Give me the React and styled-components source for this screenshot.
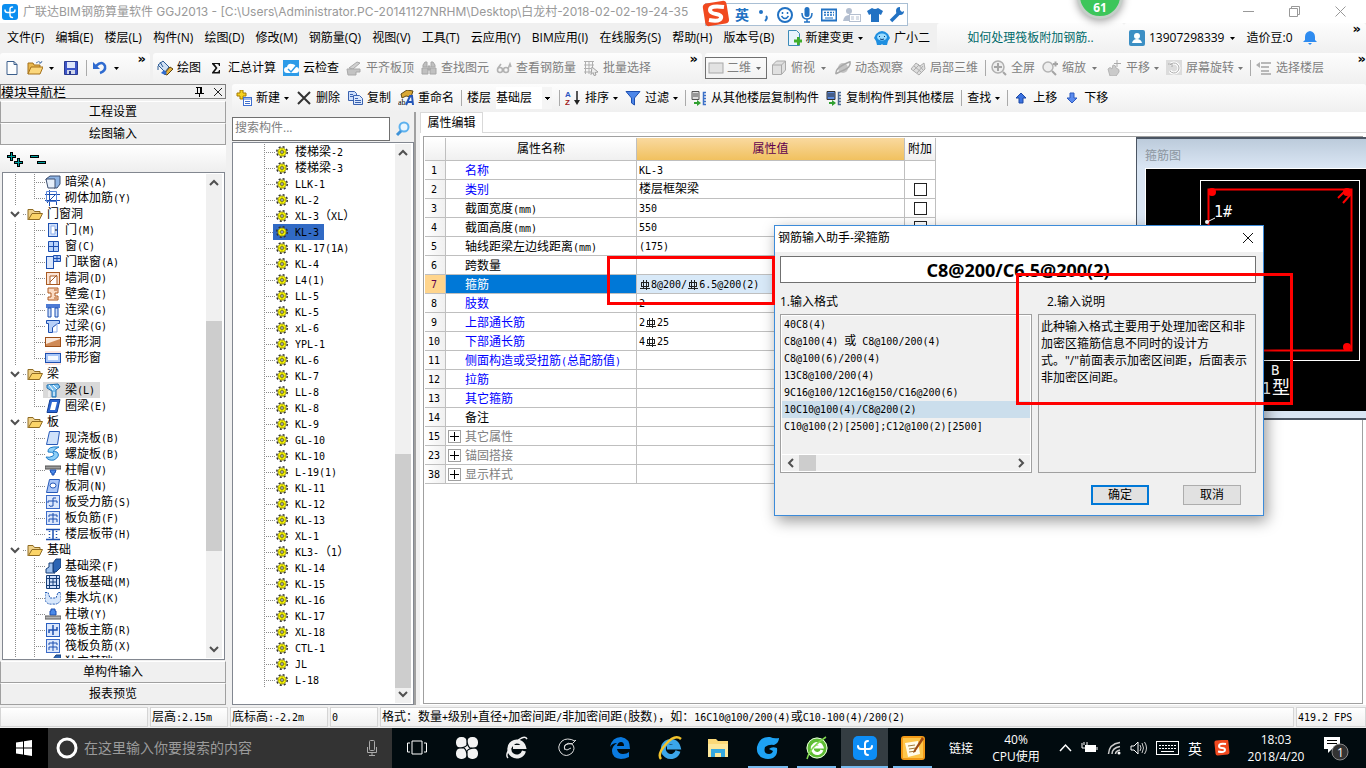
import styled, { createGlobalStyle } from "styled-components";

const GlobalStyle = createGlobalStyle`
  * {
    box-sizing: border-box;
  }

  body {
    margin: 0;
    font-family: "Open Sans", "Noto Sans CJK SC", sans-serif;
    font-size: 12px;
    line-height: 16px;
    color: #000;
    background: #f0f0f0;
  }

  button, input, select {
    font: inherit;
    color: inherit;
    border-radius: 0;
  }

  button {
    border: 0;
    background: none;
    padding: 0;
    white-space: nowrap;
  }

  ul {
    list-style: none;
    margin: 0;
    padding: 0;
  }
`

/* ---------- icons ---------- */

const B = '#1c4fb0'

const icons = {
  app: <><rect width="16" height="16" rx="3" fill="#0b8ef0"/><path d="M10.500 3q-2.500 0-2.500 2v6q0 2.500 2.500 2.500M3 6q0 2.500 2.500 2.500h5q2.500 0 2.500-2.500" stroke="#fff" strokeWidth="1.400" fill="none" strokeLinecap="round"/></>,
  newFile: <path d="M3 1.500h7l3 3v10H3z M10 1.500v3h3" fill="#fdfefe" stroke="#3c5f8c"/>,
  open: <><path d="M1 14V3h5l1 2h6v2" fill="#e9b84e" stroke="#a5701a"/><path d="M1 14l3-7h12l-3 7z" fill="#fbd77c" stroke="#a5701a"/><path d="M9 3q3-3 5 0l1-2M14 3h-2" stroke="#5a7fb0" fill="none"/></>,
  save: <><path d="M1.500 1.500h13v13h-13z" fill="#3d55c8" stroke="#2a3a90"/><path d="M4 2h8v6H4z" fill="#dfe6fa"/><path d="M4 10h8v4H4z" fill="#cfd6ea"/><path d="M6 11h2v3H6z" fill="#2a3a90"/></>,
  undo: <><path d="M4 6q6-6 9 0q1 5-5 7" stroke="#2f6bd0" strokeWidth="2.500" fill="none"/><path d="M1 2v7h7z" fill="#2f6bd0"/></>,
  paint: <><path d="M1 5l5-4 6 6-4 5z" fill="#cfe0f4" stroke="#2c5b94"/><path d="M3 2l3 5M1 6v4" stroke="#2c5b94"/><path d="M7 14l6-7 3 2-6 6z" fill="#e8b33b" stroke="#5e430f"/><path d="M4 13l4 2 2-2-3-3z" fill="#2f6bd0"/></>,
  sigma: <path d="M4 3h8v3h-1q0-2-2-2H6.500l3 4-3 4H9q2 0 2-2h1v3.500H4v-1L7.500 8 4 4z" fill="#111"/>,
  cloud: <><rect width="16" height="16" fill="#2d9be8"/><path d="M4 13a3 3 0 0 1 0-6q1-4 5-3q3 0 4 3a3 3 0 0 1 0 6z" fill="#fff"/><path d="M5 9l3 3 5-6" stroke="#2d9be8" fill="none" strokeWidth="1.500"/></>,
  align: <><path d="M3 8l8-6 3 1-7 6z" fill="#d0d0d0" stroke="#a9a9a9"/><path d="M1 9h13v3h-4v3H2z" fill="#c3c3c3" stroke="#a9a9a9"/></>,
  binoc: <><path d="M2 5l2-3h2v5H2zM10 2h2l2 3v2h-4zM1 8h6v6H1zM9 8h6v6H9zM7 6h2v4H7z" fill="#c0c0c0" stroke="#a6a6a6"/></>,
  glasses: <g fill="none" stroke="#b2b2b2" strokeWidth="1.600"><circle cx="4" cy="10" r="2.500"/><circle cx="10" cy="10" r="2.500"/><path d="M2 8l3-4M12 9l2-5 1 3"/></g>,
  batch: <><path d="M1 1.500h10M1 5h10M1 8.500h7M1 12h7M2.500 1v13M6 1v13M9.500 1v6" stroke="#b0b0b0" fill="none"/><path d="M9 7l6 5-3 .5 1 2.500-2 .5-1-3-2 2z" fill="#eee" stroke="#a0a0a0"/></>,
  plane: <rect x="1" y="3" width="14" height="10" fill="#e2e2e2" stroke="#a8a8a8"/>,
  cube: <path d="M1.500 5l4-4h9v9l-4 4.500h-9zM1.500 5h9v9M10.500 5l4-4" fill="#e0e0e0" stroke="#aaa"/>,
  orbit: <><circle cx="8" cy="8" r="5" fill="#c4c4c4"/><path d="M1 14Q0 9 8 5t7-3q1 5-6 8t-8 4" fill="none" stroke="#a8a8a8" strokeWidth="1.500"/></>,
  local3d: <path d="M1 9l5-6 4 3 4-3 1 6-6 6-4-3zM4 6l7 6M8 4l5 6M3 11l6-6M7 13l6-7" fill="#dedede" stroke="#adadad"/>,
  full: <><circle cx="7" cy="7" r="6" fill="#eee" stroke="#b0b0b0" strokeWidth="1.500"/><path d="M7 3v8M3 7h8M12 12l3 3" stroke="#a5a5a5" strokeWidth="2"/></>,
  zoom: <><circle cx="6" cy="7" r="5" fill="#eee" stroke="#b4b4b4" strokeWidth="1.500"/><path d="M10 11l4 4M11 4h5M13.500 1.500v5" stroke="#a5a5a5" strokeWidth="2"/></>,
  pan: <><path d="M2 9q2-3 4 0l1-4q3 0 3 3 4 1 3 4l-3 4H4z" fill="#cacaca" stroke="#b4b4b4"/><path d="M11 0v7M8 3.500h7" stroke="#aaa"/></>,
  rotate: <><rect x="0" y="0" width="16" height="15" fill="#dcdcdc"/><path d="M4 5a5 5 0 1 1 0 6" fill="none" stroke="#fff" strokeWidth="3"/><path d="M4 5a5 5 0 1 1 0 6M2 4h4v3" fill="none" stroke="#aaa"/></>,
  floors: <><path d="M5 2h10v2H5zM5 6h8v2H5zM5 10h8v2H5zM5 13h10v2H5z" fill="#b8b8b8"/><path d="M0 5l4-3v6z" fill="#b0b0b0"/></>,
  create: <><path d="M4 0h3v3h3v3H7v3H4V6H1V3h3z" fill="#f7d21e" stroke="#a67a00"/><rect x="7.500" y="7.500" width="8" height="8" fill="#fff" stroke="#3f6fd0"/><path d="M8 9h7M9 11.500h5M9 13.500h5" stroke="#3f6fd0"/></>,
  remove: <path d="M2 2l12 12M14 2L2 14" stroke="#333" strokeWidth="2"/>,
  copy: <><path d="M1.500 1.500h6l2 2v7h-8z" fill="#cfe0fb" stroke="#3a62b0"/><path d="M6.500 5.500h6l3 3v6h-9z" fill="#dbe8fd" stroke="#3a62b0"/><path d="M8 8.500h3M8 10.500h6M8 12.500h6M3 4.500h3M3 6.500h3" stroke="#3a62b0"/></>,
  rename: <><path d="M3 4l6-4 6 1-2 6-5-1-4 2z" fill="#d9a834" stroke="#5f4a16"/><text x="0" y="15" fontSize="8" fontFamily="Liberation Serif">ab</text><path d="M8 15l4-9h2l1 9M10 12h5" stroke="#2456b8" strokeWidth="2" fill="none"/></>,
  sort: <><text x="0" y="7" fontSize="8" fontWeight="700" fill="#2b55c0" fontFamily="Liberation Sans">A</text><text x="0" y="15" fontSize="8" fontWeight="700" fill="#a02020" fontFamily="Liberation Sans">Z</text><path d="M12 1v11" stroke="#222" strokeWidth="1.500"/><path d="M9 10h6l-3 5z" fill="#222"/></>,
  filter: <path d="M1 1.500h14L9.500 8v7l-3-2V8z" fill="#4d86e8" stroke="#1e4fb0"/>,
  fromFloor: <><path d="M1 1.500h7v8H1zM2 4h5M2 6h5" fill="#ddd" stroke="#555"/><path d="M15 2.500h-2.500v12H15M12.500 5.500H15M12.500 8.500H15M12.500 11.500H15" fill="none" stroke="#3c70c8" strokeWidth="1.500"/><path d="M3 12h3v-2l4 3-4 3v-2H3z" fill="#30a030"/></>,
  toFloor: <><path d="M1 1.500h8v8H1zM2 4h6M2 6h6" fill="#5b8be0" stroke="#333"/><path d="M15 2.500h-2.500v12H15M12.500 5.500H15M12.500 8.500H15M12.500 11.500H15" fill="none" stroke="#4b6a94" strokeWidth="1.500"/><path d="M3 12h3v-2l4 3-4 3v-2H3z" fill="#30a030"/></>,
  up: <path d="M8 3l5 5h-3v5H6V8H3z" fill="#3b72e0" stroke="#1d49a5"/>,
  down: <path d="M8 13l5-5h-3V3H6v5H3z" fill="#5b8bee" stroke="#2d5abf"/>,
  change: <><path d="M2.500 .5h8l3 3v12h-11z" fill="#e8f4fd" stroke="#3c8bb8"/><path d="M11 7l2.500 0v2.500H16v3h-2.500V15H11v-2.500H8v-3h3z" fill="#3fae2a"/></>,
  robot: <><path d="M2 4q6-6 12 0l2 4-2 3-1 4H9l-1-1-1 1H3l-1-4-2-3z" fill="#1f8fe0"/><ellipse cx="8" cy="7" rx="5" ry="3.500" fill="#9bdcff"/><path d="M5.500 6v1M10.500 6v1M6 9q2 1 4 0" stroke="#063c78" fill="none"/></>,
  user: <><rect width="16" height="16" rx="2" fill="#3c8fc4"/><circle cx="8" cy="6" r="3" fill="#fff"/><path d="M3 13q1-4 5-4t5 4z" fill="#fff"/></>,
  bell: <path d="M8 1q5 1 5 6v3l2 2H1l2-2V7q0-5 5-6M6 13h4l-2 2z" fill="#2f8cf0"/>,
  search: <><circle cx="9" cy="6" r="4.500" fill="#eaf6ff" stroke="#5db1ee" strokeWidth="2"/><path d="M6 10l-4 4" stroke="#3e92d8" strokeWidth="3"/></>,
  gear: <><circle cx="8" cy="8" r="7" fill="none" stroke="#333" strokeWidth="2" strokeDasharray="2.750 2.750"/><circle cx="8" cy="8" r="5.500" fill="#ff0" stroke="#77720a"/><path d="M8 3v3M8 10v3M3 8h3M10 8h3" stroke="#a09a00"/><rect x="6.500" y="6.500" width="3" height="3" fill="#fff" stroke="#222"/></>,
  folder: <><path d="M1 14V3.500h5l1.500 2H13V8" fill="#f0d28a" stroke="#8f6b22"/><path d="M1.500 13.500L5 7.500h10.500l-3 6z" fill="#fbd468" stroke="#8f6b22"/></>,
  t_hidden: <><path d="M1 5l4-3h10v8l-3 4H9V6H1z" fill="#8eb4e4" stroke="#3c4e70"/><path d="M1 5h9v9H3z" fill="#e6effa" stroke="#3c4e70"/></>,
  t_masonry: <><path d="M0 4.500h15M0 10.500h15M4.500 0v16M11.500 2v13M2 13l9-9" stroke={B} fill="none"/><path d="M1.500 1.500h10v10h-10z" fill="none" stroke="#5884d8"/></>,
  t_door: <><rect x="3.500" y="1.500" width="9" height="13" fill="#cfe0fb" stroke={B}/><path d="M6 4h4v8H6z" fill="#fff" stroke="#8fb0ec"/><path d="M11 7v2" stroke="#000"/></>,
  t_window: <path d="M3.500 3.500h10v10h-10zM8.500 4v10M4 8.500h10" fill="#b9d3fb" stroke={B}/>,
  t_doorwin: <><rect x="1.500" y="2.500" width="7" height="12" fill="#dbe7fb" stroke={B}/><path d="M8.500 1.500h7v6h-7zM12 2v6M9 4.500h7" fill="#a9c6f8" stroke={B}/></>,
  t_wallhole: <><rect x="1.500" y="2.500" width="13" height="12" fill="#fbe3d4" stroke="#a85a22"/><path d="M5 14V6h7v8M5 12l7-7" fill="#fff" stroke="#a85a22"/></>,
  t_niche: <><path d="M3 2h10v5h-3v3h3v4H3v-3h3V7H3z" fill="#fbdcc4" stroke="#b05a20"/><path d="M9 4h3M9 12h3" stroke="#b05a20"/></>,
  t_linkbeam: <><path d="M1 2h14v4H1z" fill="#4d7ad4"/><path d="M3 6h3v9H3zM10 6h3v9h-3z" fill="#cfe0fb" stroke={B}/></>,
  t_lintel: <><path d="M1.500 2.500h13v3h-2l-5 4v5h-4v-9h-2z" fill="#b7d0f8" stroke={B}/><path d="M12 5v9H8" fill="none" stroke="#8fb0ec"/></>,
  t_striphole: <><rect x=".5" y="3.500" width="15" height="9" fill="#fbeadd" stroke="#9c4e18"/><path d="M1 10l14-5v7H1z" fill="#cf8a57"/></>,
  t_stripwin: <><path d="M0 1h16v14H0z" fill="#fde6e0"/><rect x=".5" y="3.500" width="15" height="9" fill="#a9c6f8" stroke={B}/><rect x="3" y="6" width="10" height="4" fill="#f5f9ff"/></>,
  t_beam: <><path d="M2 3l11-1 2 3-4 3v7H7V9L2 6z" fill="#7cc0ee" stroke="#1d6fb0"/><path d="M4 3l4 5M8 3l4 4M4 9v6M9 10v4" stroke="#fff"/></>,
  t_ring: <><path d="M5 1.500h10l-3 13H2z" fill="#2b65d0" stroke="#123e94"/><path d="M7 4h5l-2 8H5z" fill="#fff"/></>,
  t_slab: <path d="M4.500 1.500h10l-2 13h-11z" fill="#cfe2fb" stroke="#2659b8"/>,
  t_spiral: <path d="M14 1Q2 0 3 6q8 0 5 4-4 2-7 1 2 4 8 3 7-4 3-8-3-1-4 0 1-3 6-5" fill="#8fd0f8" stroke="#1e7cc8"/>,
  t_cap: <><path d="M0 4h16v3H0z" fill="#9b9b9b" stroke="#4e4e4e"/><path d="M5 8h6l-1 3H9v2H7v-2H6z" fill="#4b8ae8" stroke={B}/></>,
  t_slabhole: <><path d="M4.500 1.500h10l-2 13h-11z" fill="#a9c6f8" stroke="#2659b8"/><ellipse cx="8" cy="7.500" rx="3" ry="2.500" fill="#fff" stroke="#2659b8"/></>,
  t_rebar: <><rect x="1.500" y="1.500" width="13" height="13" fill="#dce8fc" stroke="#3d6cc8"/><path d="M3 9V7h9v2M8 4v8q-4 1-4-1M8 4h3" stroke={B} fill="none"/></>,
  t_negbar: <><rect x="1.500" y="1.500" width="13" height="13" fill="#dce8fc" stroke="#3d6cc8"/><path d="M8 3v10M4 7V5h8v2M4 12V9h8v3" stroke={B} fill="none"/></>,
  t_strip: <path d="M1 3.500h14M1 13.500h14M8 4v10M4.500 5v1M4.500 8v1M4.500 11v1M11.500 5v1M11.500 8v1M11.500 11v1" stroke={B} strokeWidth="1.500" fill="none"/>,
  t_fbeam: <><path d="M8 5l3-4h5v8l-5 5H8z" fill="#2c65b4" stroke="#163e78"/><path d="M1 15v-4l3-2V5h4v9l2 1z" fill="#9cc0ee" stroke="#163e78"/></>,
  t_raft: <path d="M1.500 1.500h13v13h-13zM4.500 1v14M11.500 1v14M1 4.500h14M1 11.500h14M8 4v8M4 8h8" fill="#cfe0fb" stroke="#163e78"/>,
  t_pit: <path d="M0 2.500h3L5 8h6l2-5.500h3V10q-3 5-8 4-6 1-8-4z" fill="#d7e7fc" stroke="#2a5fb4" strokeDasharray="2 1"/>,
  t_pier: <><path d="M5 9V5h1V3h4v2h1v4z" fill="#4b8ae8" stroke={B}/><path d="M0 10h16v3H0z" fill="#b5b5b5" stroke="#5c5c5c"/></>,
  t_mainbar: <><rect x="1.500" y="1.500" width="13" height="13" fill="#dce8fc" stroke="#2a5fc0"/><path d="M8 3v10M4 11V8h8V5" stroke={B} fill="none" strokeWidth="1.500"/></>,
}

const Svg = styled.svg`
  display: block;
  flex: none;
`

const ArrowSvg = styled(Svg)`
  margin: 0 ${props => props.$tight ? 0 : 2}px;
`

function DropArrow({tight, color = '#000'}) {
  return <ArrowSvg $tight={tight} width="5" height="3" viewBox="0 0 5 3"><path d="M0 0h5L2.500 3z" fill={color}/></ArrowSvg>
}

function Icon({name, size = 16}) {
  return <Svg width={size} height={size} viewBox="0 0 16 16" aria-hidden="true">{icons[name]}</Svg>
}

function Chevron({dir = 'down', color = '#505050'}) {
  const d = {down: 'M1 3l4 4 4-4', up: 'M1 7l4-4 4 4', left: 'M7 1L3 5l4 4', right: 'M3 1l4 4-4 4'}[dir]
  return <Svg width="10" height="10" viewBox="0 0 10 10"><path d={d} fill="none" stroke={color} strokeWidth="2"/></Svg>
}

/* ---------- mixed text: full width hanzi with half width latin ---------- */

const Latin = styled.span`
  font-family: "DejaVu Sans Mono", monospace;
  font-size: 10px;
  line-height: 10px;
  white-space: pre;
`

function Mixed({children}) {
  return children.split(/([\x20-\x7e]+)/).filter(Boolean).map((part, i) =>
    /^[\x20-\x7e]/.test(part) ? <Latin key={i}>{part}</Latin> : part
  )
}

/* ---------- window frame ---------- */

const Page = styled.div`
  position: relative;
  display: flex;
  flex-direction: column;
  height: 100vh;
  overflow: hidden;
`

const TitleBar = styled.header`
  display: flex;
  align-items: center;
  height: 23px;
  flex: none;
  padding: 0 20px 0 2px;
  gap: 5px;
  background: #fff;
  color: #999;
`

const Title = styled.h1`
  flex: 1;
  margin: 0;
  font-family: Inter, "Noto Sans CJK SC", sans-serif;
  font-size: 12px;
  font-weight: 400;
  white-space: nowrap;
`

const WindowButtons = styled.div`
  display: flex;
  gap: 35px;
`

const MenuBar = styled.nav`
  display: flex;
  height: 30px;
  flex: none;
`

const MenuGroup = styled.div`
  display: flex;
  align-items: center;
  justify-content: space-between;
  padding: 0 7px;
  width: 937px;
  flex: none;
`

const Strip = styled.div`
  display: flex;
  align-items: center;
  justify-content: ${props => props.$center ? 'center' : 'flex-start'};
  flex: ${props => props.$grow ? '1' : 'none'};
  min-width: 0;
  padding: 0 ${props => props.$pad ?? 4}px;
  gap: ${props => props.$gap ?? 7}px;
  width: ${props => props.$width ? props.$width + 'px' : 'auto'};
  border-radius: 3px;
  background: linear-gradient(#fdfdfd, #f0f0f0);
`

const ToolBar = styled.div`
  display: flex;
  gap: 3px;
  height: ${props => props.$height}px;
  flex: none;
`

const Tool = styled.button`
  display: flex;
  align-items: center;
  flex: none;
  gap: 4px;
  color: ${props => props.$dim ? '#808080' : '#000'};
`

const Divider = styled.span`
  width: 1px;
  height: 16px;
  flex: none;
  margin-right: -2px;
  background: #aaa;
`

const More = styled.button`
  align-self: flex-start;
  margin-left: auto;
  font: 700 13px/12px "DejaVu Sans", sans-serif;
`

const TipLink = styled.a`
  color: #006a6a;
  text-decoration: none;
`

const ViewSelect = styled.button`
  display: flex;
  align-items: center;
  gap: 3px;
  width: 62px;
  height: 22px;
  margin-right: -3px;
  padding: 0 2px;
  border: 1px solid #707070;
  color: #808080;
`

const FloorBox = styled.label`
  display: flex;
  align-items: center;
  gap: 5px;
`

const FloorSelect = styled.select`
  width: 56px;
  height: 22px;
  padding: 0;
  border: 0;
  appearance: none;
  background: linear-gradient(#000, #000) 49px 10px / 5px 1px no-repeat,
    linear-gradient(#000, #000) 50px 11px / 3px 1px no-repeat,
    linear-gradient(#000, #000) 51px 12px / 1px 1px no-repeat,
    linear-gradient(90deg, #fff 46px, #f5f5f5 46px);
`

/* ---------- body ---------- */

const Body = styled.main`
  display: flex;
  flex: 1;
  min-height: 0;
  gap: 6px;
  padding-top: 1px;
`

const Sidebar = styled.aside`
  display: flex;
  flex-direction: column;
  width: 226px;
  flex: none;
`

const DockTitle = styled.div`
  display: flex;
  align-items: center;
  height: 15px;
  margin-bottom: 2px;
  border: 1px solid #808080;
  font-size: 13px;
  flex: none;
  padding-right: 3px;
  gap: 10px;
  overflow: hidden;
`

const DockName = styled.span`
  flex: 1;
`

const SectionButton = styled.button`
  height: 22px;
  flex: none;
  border: 1px solid #a0a0a0;
  border-top-color: #fff;
  background: #f0f0f0;
`

const ExpandBar = styled.div`
  display: flex;
  align-items: center;
  gap: 7px;
  height: 27px;
  flex: none;
  padding-left: 6px;
  background: linear-gradient(#fff, #eee);
`

const Framed = styled.div`
  display: flex;
  flex: 1;
  min-height: 0;
  margin: ${props => props.$inset ? '0 1px 1px 2px' : '0'};
  padding: 1px 2px 1px 0;
  border: 1px solid #828790;
  background: #fff;
`

const List = styled.ul`
  flex: 1;
  overflow: hidden;
`

const ScrollTrack = styled.div`
  display: flex;
  flex-direction: column;
  align-items: center;
  justify-content: space-between;
  width: 16px;
  padding: 4px 0;
  background: #f0f0f0;
`

const ThumbArea = styled.div`
  display: flex;
  flex-direction: column;
  width: 100%;
  flex: 1;
`

const ThumbPart = styled.div`
  flex: ${props => props.$weight} 0 0;
  background: ${props => props.$solid ? '#cdcdcd' : 'transparent'};
`

const dotsV = 'repeating-linear-gradient(#8c8c8c 0 1px, transparent 1px 2px)'
const dotsH = 'repeating-linear-gradient(90deg, #8c8c8c 0 1px, transparent 1px 2px)'

const TreeRow = styled.li`
  display: flex;
  align-items: center;
  height: 16px;
  padding-left: ${props => props.$indent}px;
  white-space: nowrap;
`

const Guide = styled.span`
  width: 19px;
  height: 16px;
  flex: none;
  background: ${dotsV} 0 0 / 1px 16px no-repeat;
`

const Branch = styled.span`
  width: 11px;
  height: 16px;
  flex: none;
  background: ${dotsV} 0 0 / 1px ${props => props.$last ? 8 : 16}px no-repeat,
    ${dotsH} 0 8px / 11px 1px no-repeat;
`

const Stub = styled.span`
  width: 4px;
  height: 1px;
  margin-left: 3px;
  background: ${dotsH};
`

const Leaf = styled.span`
  display: flex;
  align-items: center;
  height: 16px;
  gap: 4px;
  margin-left: -2px;
  padding: 0 5px 0 2px;
  background: ${props => props.$active ? '#d9d9d9' : 'transparent'};
`

const FolderName = styled.span`
  margin-left: 4px;
`

const Center = styled.section`
  display: flex;
  flex-direction: column;
  flex: 1;
  min-width: 0;
`

const Columns = styled.div`
  display: flex;
  gap: 4px;
  flex: 1;
  min-height: 0;
`

const ComponentPane = styled.div`
  display: flex;
  flex-direction: column;
  width: 184px;
  flex: none;
  padding-top: 5px;
  border-right: 2px solid #a0a0a0;
`

const SearchRow = styled.div`
  display: flex;
  align-items: center;
  gap: 5px;
  height: 25px;
  padding-bottom: 1px;
  flex: none;
`

const SearchInput = styled.input`
  width: 158px;
  height: 24px;
  padding: 0 2px 3px;
  border: 1px solid #707070;
  background: #fff;

  &::placeholder {
    color: #808080;
    opacity: 1;
  }
`

const ComponentLeaf = styled.span`
  display: flex;
  align-items: center;
  height: 16px;
  gap: 7px;
  margin-left: -2px;
  padding: 0 5px 0 3px;
  background: ${props => props.$active ? '#316ac5' : 'transparent'};
`

const EditorPane = styled.div`
  position: relative;
  display: flex;
  flex-direction: column;
  flex: 1;
  min-width: 0;
  background: #fff;
`

const TabBar = styled.div`
  display: flex;
  height: 21px;
  flex: none;

  &::after {
    content: '';
    flex: 1;
    border-bottom: 1px solid #d9d9d9;
  }
`

const Tab = styled.button`
  width: 63px;
  border: 1px solid #d9d9d9;
  border-bottom: 0;
`

const Sheet = styled.div`
  flex: 1;
  min-height: 0;
  margin: 3px 3px 1px;
  padding: 1px;
  border: 1px solid #a0a0a0;
`

/* ---------- property table ---------- */

const PropertyTable = styled.table`
  width: 511px;
  table-layout: fixed;
  border-collapse: separate;
  border-spacing: 0;

  th, td {
    height: 19px;
    padding: 0 0 0 2px;
    font-weight: 400;
    text-align: left;
    white-space: nowrap;
    border-right: 1px solid #bfbfbf;
    border-bottom: 1px solid #bfbfbf;
    overflow: hidden;
    line-height: 16px;
  }

  thead th {
    height: 23px;
    padding: 0;
    text-align: center;
    background: linear-gradient(#fff, #f0f0f0);
  }

  thead th.value {
    color: #60004e;
    background: linear-gradient(#f9d99f, #f1c15f);
  }
`

const NumberCell = styled.th`
  && {
    padding: 0 2px 0 0;
    text-align: center;
    color: ${props => props.$active ? '#60004e' : '#000'};
    background: ${props => props.$active ? '#ffd58d' : 'linear-gradient(90deg, #fff, #f0f0f0)'};
  }
`

const nameColors = {key: '#0000ff', plain: '#000', group: '#808080'}

const NameCell = styled.td`
  color: ${props => props.$active ? '#fff' : nameColors[props.$kind]};
  background: ${props => props.$active ? '#0078d7' : '#fff'};
`

const NameInner = styled.div`
  display: flex;
  align-items: center;
  gap: 4px;
  padding-top: 1px;
  padding-left: ${props => props.$group ? 0 : 17}px;
`

const ValueCell = styled.td`
  background: ${props => props.$active ? '#d8e9f8' : '#fff'};
`

const CheckCell = styled.td`
  && {
    padding: 0;
    text-align: center;
  }
`

const Check = styled.input`
  display: block;
  appearance: none;
  width: 13px;
  height: 13px;
  margin: 0 auto;
  border: 1px solid #222;
  background: #fff;
`

const Expander = styled.button`
  display: grid;
  place-items: center;
  width: 13px;
  height: 13px;
  border: 1px solid #a0a0a0;
`

const RebarSvg = styled.svg`
  display: inline-block;
  vertical-align: -2px;
  margin: 0 1px;
`

function Rebar() {
  return <RebarSvg width="10" height="10" viewBox="0 0 10 10">
    <path d="M3.500 0v8M6.500 0v10M1.500 2.500v4M8.500 2.500v4M1 2.500h8M1 6.500h8M0 8.500h10" stroke="#222" fill="none"/>
  </RebarSvg>
}

/* ---------- floating windows ---------- */

const Diagram = styled.section`
  position: absolute;
  top: 25px;
  right: 0;
  width: 230px;
  height: 283px;
  padding: 9px 0 0 8px;
  border: 2px solid #4b5563;
  border-width: 2px 0 2px 1px;
  background: linear-gradient(#bccbdb, #d9e5f3 28px);
`

const DiagramTitle = styled.h2`
  margin: 0;
  padding-bottom: 4px;
  font-size: 12px;
  font-weight: 400;
  color: #8c96a0;
`

const DiagramSvg = styled.svg`
  display: block;
  width: 100%;
  border: 1px solid #fff;
  border-width: 1px 0 0 1px;
  background: #000;
`

const Dialog = styled.section`
  position: absolute;
  left: 774px;
  top: 225px;
  width: 490px;
  border: 1px solid #3c8bd9;
  background: #f0f0f0;
  box-shadow: 3px 5px 14px rgba(0, 0, 0, .4);
`

const DialogTitle = styled.header`
  display: flex;
  align-items: center;
  justify-content: space-between;
  height: 26px;
  padding: 0 9px 2px 3px;
  background: #fff;
`

const DialogName = styled.h2`
  margin: 0;
  font-size: 12px;
  font-weight: 400;
`

const DialogBody = styled.div`
  display: grid;
  grid-template-columns: 252px 218px;
  column-gap: 6px;
  padding: 4px 5px 10px;
`

const Formula = styled.input`
  grid-column: 1 / -1;
  height: 27px;
  padding: 0;
  border: 1px solid #707070;
  background: #fff;
  text-align: center;
  font-size: 18px;
  font-weight: 700;
  font-family: "Noto Sans", sans-serif;
`

const Caption = styled.h3`
  margin: 11px 0 4px;
  padding-left: ${props => props.$shift ? 9 : 0}px;
  font-size: 12px;
  line-height: 16px;
  font-weight: 400;
`

const FormatBox = styled.div`
  display: flex;
  flex-direction: column;
  height: 159px;
  padding: 1px;
  border: 1px solid #a0a0a0;
  outline: 1px solid #fff;
  outline-offset: -2px;
`

const Format = styled.li`
  height: 17px;
  padding-left: 2px;
  white-space: nowrap;
  background: ${props => props.$active ? '#cbdeec' : 'transparent'};
`

const HScroll = styled.div`
  display: flex;
  align-items: center;
  height: 17px;
  padding: 0 4px;
  border-top: 1px solid #fff;
`

const HThumb = styled.span`
  width: 17px;
  height: 16px;
  margin: 0 auto 0 3px;
  background: #cdcdcd;
`

const Note = styled.p`
  margin: 0;
  height: 159px;
  padding: 3px 2px;
  border: 1px solid #a0a0a0;
  line-height: 17px;
`

const DialogActions = styled.div`
  grid-column: 1 / -1;
  display: flex;
  justify-content: flex-end;
  gap: 34px;
  padding: 12px 15px 0;
`

const ActionButton = styled.button`
  width: 58px;
  height: 20px;
  background: #e1e1e1;
  border: ${props => props.$primary ? '2px solid #0078d7' : '1px solid #adadad'};
`

const Marker = styled.div`
  position: absolute;
  left: ${props => props.$x}px;
  top: ${props => props.$y}px;
  width: ${props => props.$w}px;
  height: ${props => props.$h}px;
  border: 3px solid #f00;
  pointer-events: none;
`

const ImeBar = styled.div`
  position: absolute;
  left: 705px;
  top: 3px;
  display: flex;
  align-items: center;
  gap: 6px;
  width: 203px;
  height: 23px;
  padding: 0 3px 0 29px;
  border: 1px solid #a9bfd4;
  background: #fff;
  color: #2272c3;
  font-size: 14px;
  font-weight: 700;
`

const ImeLogo = styled.svg`
  position: absolute;
  left: -4px;
  top: -4px;
`

const SpeedBall = styled.div`
  position: absolute;
  left: 1077px;
  top: -27px;
  width: 46px;
  height: 46px;
  padding-top: 24px;
  border: 3px solid #c4cfc8;
  border-radius: 50%;
  background: #3cc65a;
  box-shadow: 0 2px 8px rgba(0, 0, 0, .4);
  color: #fff;
  font-weight: 700;
  text-align: center;
`

/* ---------- status bar and task bar ---------- */

const StatusBar = styled.footer`
  display: flex;
  gap: 2px;
  height: 23px;
  flex: none;
  padding: 2px 0 1px;
`

const StatusCell = styled.span`
  display: flex;
  align-items: center;
  flex: ${props => props.$width ? 'none' : '1'};
  width: ${props => props.$width ? props.$width + 'px' : 'auto'};
  padding-left: 1px;
  border: 1px solid #d5d5d5;
  background: linear-gradient(#fff, #f0f0f0);
  white-space: pre;
`

const TaskBar = styled.footer`
  display: flex;
  height: 40px;
  flex: none;
  background: #010b0f;
  color: #fff;
`

const StartButton = styled.button`
  display: grid;
  place-items: center;
  width: 48px;
  background: #000;
`

const TaskSearch = styled.label`
  display: flex;
  align-items: center;
  gap: 6px;
  width: 344px;
  padding: 0 14px 0 8px;
  background: #333;
`

const TaskInput = styled.input`
  flex: 1;
  min-width: 0;
  padding: 0;
  border: 0;
  background: none;
  font-size: 14px;

  &::placeholder {
    color: #9b9b9b;
    opacity: 1;
  }
`

const TaskApp = styled.button`
  display: grid;
  place-items: center;
  width: ${props => props.$width ?? 50}px;
  border-bottom: 2px solid ${props => props.$running ? '#76b9ed' : 'transparent'};
  border-top: 2px solid transparent;
  margin: 0 ${props => props.$gap ?? 0}px;
  background: ${props => props.$active ? '#343d42' : 'transparent'};
`

const Tray = styled.div`
  display: flex;
  align-items: center;
  flex: 1;
  padding-left: 12px;
`

const TrayText = styled.span`
  flex: none;
  width: ${props => props.$width ? props.$width + 'px' : 'auto'};
  text-align: center;
  line-height: 17px;
  font-size: ${props => props.$size ?? 12}px;
  white-space: pre-line;
  margin-left: ${props => props.$left ?? 0}px;
`

const TrayIcons = styled.div`
  display: flex;
  align-items: center;
  gap: 9px;
  margin-left: ${props => props.$left}px;
`

const Notifications = styled.button`
  display: flex;
  margin-left: 17px;
`

/* ---------- data ---------- */

const menus = ['文件(F)', '编辑(E)', '楼层(L)', '构件(N)', '绘图(D)', '修改(M)', '钢筋量(Q)', '视图(V)',
  '工具(T)', '云应用(Y)', 'BIM应用(I)', '在线服务(S)', '帮助(H)', '版本号(B)']

const tree = [
  {leaves: [['t_hidden', '暗梁(A)'], ['t_masonry', '砌体加筋(Y)']]},
  {name: '门窗洞', leaves: [['t_door', '门(M)'], ['t_window', '窗(C)'], ['t_doorwin', '门联窗(A)'],
    ['t_wallhole', '墙洞(D)'], ['t_niche', '壁龛(I)'], ['t_linkbeam', '连梁(G)'], ['t_lintel', '过梁(G)'],
    ['t_striphole', '带形洞'], ['t_stripwin', '带形窗']]},
  {name: '梁', leaves: [['t_beam', '梁(L)'], ['t_ring', '圈梁(E)']]},
  {name: '板', leaves: [['t_slab', '现浇板(B)'], ['t_spiral', '螺旋板(B)'], ['t_cap', '柱帽(V)'],
    ['t_slabhole', '板洞(N)'], ['t_rebar', '板受力筋(S)'], ['t_negbar', '板负筋(F)'], ['t_strip', '楼层板带(H)']]},
  {name: '基础', open: true, leaves: [['t_fbeam', '基础梁(F)'], ['t_raft', '筏板基础(M)'], ['t_pit', '集水坑(K)'],
    ['t_pier', '柱墩(Y)'], ['t_mainbar', '筏板主筋(R)'], ['t_negbar', '筏板负筋(X)'], ['t_fbeam', '独立基础(P)']]},
]

const components = ['楼梯梁-2', '楼梯梁-3', 'LLK-1', 'KL-2', 'XL-3（XL）', 'KL-3', 'KL-17(1A)', 'KL-4', 'L4(1)',
  'LL-5', 'KL-5', 'xL-6', 'YPL-1', 'KL-6', 'KL-7', 'LL-8', 'KL-8', 'KL-9', 'GL-10', 'KL-10', 'L-19(1)', 'KL-11',
  'KL-12', 'KL-13', 'XL-1', 'KL3-（1）', 'KL-14', 'KL-15', 'KL-16', 'KL-17', 'XL-18', 'CTL-1', 'JL', 'L-18']

// '$' in a value stands for the rebar grade symbol
const properties = [
  ['1', 'key', '名称', 'KL-3'],
  ['2', 'key', '类别', '楼层框架梁'],
  ['3', 'plain', '截面宽度(mm)', '350'],
  ['4', 'plain', '截面高度(mm)', '550'],
  ['5', 'plain', '轴线距梁左边线距离(mm)', '(175)'],
  ['6', 'plain', '跨数量', ''],
  ['7', 'key', '箍筋', '$8@200/$6.5@200(2)'],
  ['8', 'key', '肢数', '2'],
  ['9', 'key', '上部通长筋', '2$25'],
  ['10', 'key', '下部通长筋', '4$25'],
  ['11', 'key', '侧面构造或受扭筋(总配筋值)', ''],
  ['12', 'key', '拉筋', ''],
  ['13', 'key', '其它箍筋', ''],
  ['14', 'plain', '备注', ''],
  ['15', 'group', '其它属性', ''],
  ['23', 'group', '锚固搭接', ''],
  ['38', 'group', '显示样式', ''],
]

const formats = ['40C8(4)', 'C8@100(4) 或 C8@100/200(4)', 'C8@100(6)/200(4)', '13C8@100/200(4)',
  '9C16@100/12C16@150/C16@200(6)', '10C10@100(4)/C8@200(2)', 'C10@100(2)[2500];C12@100(2)[2500]']

/* ---------- parts ---------- */

function ToolItem({icon, label, arrow, dim, tight}) {
  return <Tool $dim={dim} type="button">
    {icon && <Icon name={icon}/>}
    {label && <span>{label}</span>}
    {arrow && <DropArrow tight={tight} color={dim ? '#777' : '#000'}/>}
  </Tool>
}

function ScrollBar({before, size, after}) {
  return <ScrollTrack>
    <Chevron dir="up"/>
    <ThumbArea>
      <ThumbPart $weight={before}/>
      <ThumbPart $weight={size} $solid/>
      <ThumbPart $weight={after}/>
    </ThumbArea>
    <Chevron/>
  </ScrollTrack>
}

function ModuleTree() {
  return <Framed $inset>
    <List>
      {tree.map((group, g) => [
        group.name && <TreeRow key={group.name} $indent={7}>
          <Chevron/>
          <Stub/>
          <Icon name="folder"/>
          <FolderName>{group.name}</FolderName>
        </TreeRow>,
        ...group.leaves.map(([icon, label], i) =>
          <TreeRow key={g + label} $indent={12}>
            <Guide/>
            <Branch $last={!group.open && i === group.leaves.length - 1}/>
            <Leaf $active={label === '梁(L)'}>
              <Icon name={icon}/>
              <span><Mixed>{label}</Mixed></span>
            </Leaf>
          </TreeRow>
        ),
      ])}
    </List>
    <ScrollBar before={132} size={229} after={92}/>
  </Framed>
}

function PropertyValue({value}) {
  return value.split('$').map((part, i) =>
    <span key={i}>{i > 0 && <Rebar/>}<Mixed>{part}</Mixed></span>
  )
}

function Properties() {
  return <PropertyTable>
    <colgroup>
      <col width="21"/>
      <col width="191"/>
      <col width="268"/>
      <col width="31"/>
    </colgroup>
    <thead>
      <tr>
        <th aria-label="#"></th>
        <th>属性名称</th>
        <th className="value">属性值</th>
        <th>附加</th>
      </tr>
    </thead>
    <tbody>
      {properties.map(([no, kind, name, value], i) => {
        const active = no === '7'
        return <tr key={no}>
          <NumberCell $active={active}><Mixed>{no}</Mixed></NumberCell>
          <NameCell $active={active} $kind={kind}>
            <NameInner $group={kind === 'group'}>
              {kind === 'group' && <Expander type="button" aria-label={name}>
                <svg width="9" height="9"><path d="M0 4.500h9M4.500 0v9" stroke="#000"/></svg>
              </Expander>}
              <span><Mixed>{name}</Mixed></span>
            </NameInner>
          </NameCell>
          <ValueCell $active={active}><PropertyValue value={value}/></ValueCell>
          <CheckCell>{i > 0 && kind !== 'group' && <Check type="checkbox" aria-label={name}/>}</CheckCell>
        </tr>
      })}
    </tbody>
  </PropertyTable>
}

function StirrupDiagram() {
  return <Diagram>
    <DiagramTitle>箍筋图</DiagramTitle>
    <DiagramSvg height="243" viewBox="1146 170 220 242" preserveAspectRatio="xMinYMin slice">
      <rect x="1200.500" y="181.500" width="159" height="180" fill="none" stroke="#fff"/>
      <rect x="1208.500" y="190.500" width="143" height="161" fill="none" stroke="#f00" strokeWidth="2"/>
      <g fill="#f00">
        <circle cx="1212" cy="193" r="4"/>
        <circle cx="1347" cy="193" r="4"/>
        <circle cx="1347" cy="348" r="4"/>
      </g>
      <path d="M1338 199l8-8M1343 204l8-9" stroke="#f00" strokeWidth="2"/>
      <path d="M1207 223l8-4" stroke="#fff"/>
      <circle cx="1207" cy="223" r="2" fill="#fff"/>
      <g fill="#fff" fontFamily="DejaVu Sans Mono, Noto Sans CJK SC, monospace">
        <text x="1214" y="218" fontSize="15">1#</text>
        <text x="1271" y="376" fontSize="14">B</text>
        <text x="1262" y="395" fontSize="15">1</text>
        <text x="1272" y="395" fontSize="18">型</text>
      </g>
    </DiagramSvg>
  </Diagram>
}

function RebarDialog() {
  return <Dialog role="dialog" aria-labelledby="rebar-title">
    <DialogTitle>
      <DialogName id="rebar-title">钢筋输入助手-梁箍筋</DialogName>
      <button type="button" aria-label="关闭">
        <Svg width="12" height="12"><path d="M1 1l10 10M11 1L1 11" stroke="#111"/></Svg>
      </button>
    </DialogTitle>
    <DialogBody>
      <Formula aria-label="输入格式" defaultValue="C8@200/C6.5@200(2)"/>
      <Caption>1.输入格式</Caption>
      <Caption $shift>2.输入说明</Caption>
      <FormatBox>
        <List>
          {formats.map((format, i) => <Format key={format} $active={i === 5}><Mixed>{format}</Mixed></Format>)}
        </List>
        <HScroll>
          <Chevron dir="left"/>
          <HThumb/>
          <Chevron dir="right"/>
        </HScroll>
      </FormatBox>
      <Note>此种输入格式主要用于处理加密区和非加密区箍筋信息不同时的设计方式。"/"前面表示加密区间距，后面表示非加密区间距。</Note>
      <DialogActions>
        <ActionButton $primary type="button">确定</ActionButton>
        <ActionButton type="button">取消</ActionButton>
      </DialogActions>
    </DialogBody>
  </Dialog>
}

function Ime() {
  return <ImeBar>
    <ImeLogo width="28" height="28" viewBox="0 0 28 28">
      <rect x="2" y="2" width="24" height="23" rx="4" fill="#f1491f" transform="rotate(-9 14 14)"/>
      <path d="M22 7Q8 5 8 10q0 3 6 4t5 4q-1 4-12 2" fill="none" stroke="#fff" strokeWidth="4"/>
    </ImeLogo>
    <span>英</span>
    <Svg width="16" height="16"><circle cx="6" cy="5" r="2" fill="#2272c3"/><path d="M11 9q2 2-1 5" stroke="#2272c3" strokeWidth="2" fill="none"/></Svg>
    <Svg width="16" height="16"><circle cx="8" cy="8" r="7" fill="none" stroke="#2272c3" strokeWidth="2"/><path d="M5.500 5v2M10.500 5v2M4.500 9q3.500 5 7 0" stroke="#2272c3" strokeWidth="1.500" fill="none"/></Svg>
    <Svg width="16" height="16"><rect x="5.500" y="0" width="5" height="10" rx="2.500" fill="#2272c3"/><path d="M3 6q0 6 5 6t5-6M8 12v3M5 15h6" stroke="#2272c3" strokeWidth="1.500" fill="none"/></Svg>
    <Svg width="16" height="16"><rect x=".5" y="2.500" width="15" height="11" fill="#fff" stroke="#2272c3" strokeWidth="2"/><path d="M3 5.500h10M3 8h10" stroke="#2272c3" strokeWidth="1.500" strokeDasharray="2 1"/><path d="M4 11h8" stroke="#2272c3"/></Svg>
    <Svg width="18" height="16"><circle cx="6" cy="4" r="3" fill="#b4bfd0"/><path d="M0 14q1-6 6-6t5 6z" fill="#b4bfd0"/><rect x="6.500" y="7.500" width="11" height="7" fill="#fff" stroke="#b4bfd0"/><path d="M8 10h3M13 10h3M8 12h3M13 12h3" stroke="#b4bfd0"/></Svg>
    <Svg width="16" height="16"><path d="M5 1q3 2 6 0l5 3-2 4-2-1v8H4V7L2 8 0 4z" fill="#2272c3"/></Svg>
    <Svg width="16" height="16"><path d="M2 14l8-8" stroke="#2272c3" strokeWidth="3.500"/><path d="M15 4a4 4 0 1 1-4-4v3l2 2z" fill="#2272c3"/></Svg>
  </ImeBar>
}

const taskIcons = {
  view: <path d="M7 5h10v13H7zM5 7H2.500v9H5M19 7h2.500v9H19" fill="none" stroke="#fff"/>,
  clover: <><g fill="#f3f3f3"><rect x="1" y="1" width="11" height="11" rx="5"/><rect x="12" y="1" width="11" height="11" rx="5"/><rect x="1" y="12" width="11" height="11" rx="5"/><rect x="12" y="12" width="11" height="11" rx="5"/><path d="M8 8h8v8H8z"/></g><path d="M12 3v6q-2 3-9 3M21 12h-6q-3-2-3-9M12 21v-6q2-3 9-3M3 12h6q3 2 3 9" stroke="#010b0f" strokeWidth="1.200" fill="none"/></>,
  ie: <><path d="M19 15a7.500 7.500 0 1 1 0-4H8" fill="none" stroke="#eee" strokeWidth="4"/><path d="M3 22Q-1 18 9 8T22 3" fill="none" stroke="#eee" strokeWidth="1.500"/></>,
  swirl: <g fill="none" stroke="#ddd"><path d="M20 5q-8-4-13 0-6 6-1 12 5 5 11 0 4-5 0-9-4-2-7 1-2 4 2 5l4-2"/><path d="M21 4q-3 5-8 4-5 1-3 6"/></g>,
  edge: <path d="M2 11Q4 1 13 1q9 1 9 12H9q1 5 6 5 4 0 6-2v5q-4 2-8 2Q4 22 4 15q0-5 5-8-5 0-7 4m7-1h7q0-4-3-4t-4 4" fill="#0a7ae0"/>,
  ieBlue: <><path d="M20 15a7.500 7.500 0 1 1 0-4H9" fill="none" stroke="#3ba6ea" strokeWidth="5"/><path d="M3 23Q-1 18 8 8T23 3" fill="none" stroke="#f2c32c" strokeWidth="2.500"/></>,
  files: <><path d="M2 3h8l2 2h10v16H2z" fill="#fbd978"/><path d="M2 8h20v13H2z" fill="#fde89c"/><path d="M5 21v-8h14v8h-4v-4H9v4z" fill="#35a8e0"/></>,
  glodon: <path d="M23 2q0 5-5 7-5-1-9 2-2 7 4 7 3 0 4-3-2-1-4-2 3-3 8-1 1 7-4 10-5 2-10 0Q0 19 1 11 4 0 14 1q4 2 9 1" fill="#1ea2f3"/>,
  green: <><circle cx="12" cy="12" r="10.500" fill="#5ebc34"/><circle cx="12" cy="12" r="10" fill="none" stroke="#e7f6df"/><path d="M17 14a5 5 0 1 1 0-3H8" fill="none" stroke="#fff" strokeWidth="3"/><path d="M2 23Q4 12 21 1" fill="none" stroke="#7fd84f" strokeWidth="1.500"/></>,
  cad: <><rect width="24" height="24" rx="5" fill="#0d8df5"/><path d="M15 5q-3 0-3 3v8q0 3 3 3M5 10q0 3 3 3h8q3 0 3-3" stroke="#fff" strokeWidth="2" fill="none" strokeLinecap="round"/></>,
  notes: <><rect width="24" height="24" rx="3" fill="#f29a17"/><rect x="2" y="2" width="20" height="20" fill="#fdc64a"/><path d="M4 7l13-2 2 13-12 3z" fill="#fffbe8"/><path d="M7 10l7-1M8 13l7-1M8 16l7-1" stroke="#a07a3c"/><path d="M21 1l2 2-9 13-2 1 1-3z" fill="#9e4a12"/></>,
}

function TaskButton({name, ...rest}) {
  return <TaskApp type="button" aria-label={name} {...rest}>
    <Svg width="24" height="24" viewBox="0 0 24 24">{taskIcons[name]}</Svg>
  </TaskApp>
}

function Tasks() {
  return <TaskBar>
    <StartButton type="button" aria-label="开始">
      <Svg width="16" height="16"><path d="M0 2.500L7 1.500V7.500H0zM8 1.300L16 0v7.500H8zM0 8.500h7v6l-7-1zM8 8.500h8V16l-8-1.300z" fill="#fff"/></Svg>
    </StartButton>
    <TaskSearch>
      <Svg width="22" height="22"><circle cx="11" cy="11" r="9" fill="none" stroke="#fff" strokeWidth="3"/></Svg>
      <TaskInput placeholder="在这里输入你要搜索的内容" aria-label="搜索"/>
      <Svg width="12" height="18"><rect x="3.500" y="1.500" width="5" height="10" rx="1" fill="none" stroke="#aaa"/><path d="M1.500 8v5.500h9V8M6 14v3M3 16.500h6" fill="none" stroke="#aaa"/></Svg>
    </TaskSearch>
    <TaskButton name="view"/>
    <TaskButton name="clover"/>
    <TaskButton name="ie"/>
    <TaskButton name="swirl"/>
    <TaskButton name="edge" $width={56}/>
    <TaskButton name="ieBlue" $width={44}/>
    <TaskButton name="files" $width={52}/>
    <TaskButton name="glodon" $width={40} $gap={4} $running/>
    <TaskButton name="green" $width={39} $gap={5} $running/>
    <TaskButton name="cad" $width={47} $running $active/>
    <TaskButton name="notes" $width={39} $gap={5} $running/>
    <Tray>
      <TrayText>链接</TrayText>
      <TrayText $width={50} $left={18}>{'40%\nCPU使用'}</TrayText>
      <TrayIcons $left={18}>
        <Svg width="13" height="12"><path d="M1 9l5.500-6L12 9" fill="none" stroke="#fff" strokeWidth="1.500"/></Svg>
        <Svg width="17" height="16"><path d="M1 3v5h3M3 2v3M6 2v3" stroke="#fff" fill="none"/><rect x="4.500" y="5.500" width="10" height="6" fill="#fff" stroke="#fff"/><path d="M16 7v3" stroke="#fff"/></Svg>
        <Svg width="14" height="14"><path d="M1.500 13Q2 3 13 1.500M5 13q0-6 8-7.500M8.500 13q0-3 4.500-4" fill="none" stroke="#ccc" strokeWidth="1.500"/><circle cx="12" cy="12" r="1.500" fill="#fff"/></Svg>
        <Svg width="17" height="14"><path d="M1 5h3l4-4v12L4 9H1z" fill="none" stroke="#fff"/><path d="M10 4q2 3 0 6M12 2q3 5 0 10M14.500 1q4 6 0 12" fill="none" stroke="#ccc"/></Svg>
        <Svg width="23" height="14"><rect x=".5" y=".5" width="22" height="13" fill="none" stroke="#fff"/><path d="M3 4.500h17M3 7.500h17" stroke="#fff" strokeDasharray="2 1"/><path d="M5 10.500h13" stroke="#fff"/></Svg>
        <TrayText $size={14}>英</TrayText>
      </TrayIcons>
      <TrayIcons $left={12}>
        <Svg width="16" height="16"><rect x="1" y="0" width="14" height="15" rx="2" fill="#f1491f" transform="rotate(-6 8 8)"/><path d="M12 4Q5 3 5 6q0 2 3 2t3 2q0 3-7 1.500" fill="none" stroke="#fff" strokeWidth="2"/></Svg>
      </TrayIcons>
      <TrayText $width={62} $left={15}>{'18:03\n2018/4/20'}</TrayText>
      <Notifications type="button" aria-label="通知">
        <Svg width="26" height="26"><path d="M0 2h16v12H8l-4 4v-4H0z" fill="#fff"/><path d="M3 5.500h10M3 8.500h10" stroke="#000"/><circle cx="16" cy="17" r="8" fill="#333" stroke="#888"/><text x="13" y="22" fill="#fff" fontSize="12">1</text></Svg>
      </Notifications>
    </Tray>
  </TaskBar>
}

export default function App() {
  return <Page>
    <GlobalStyle/>
    <TitleBar>
      <Icon name="app"/>
      <Title>广联达BIM钢筋算量软件 GGJ2013 - [C:\Users\Administrator.PC-20141127NRHM\Desktop\白龙村-2018-02-02-19-24-35</Title>
      <WindowButtons>
        <button type="button" aria-label="最小化"><Svg width="11" height="11"><path d="M0 5.500h11" stroke="#999"/></Svg></button>
        <button type="button" aria-label="还原"><Svg width="11" height="11"><path d="M.5 2.500h8v8h-8zM2.500 2V.5h8v8H9" fill="none" stroke="#999"/></Svg></button>
        <button type="button" aria-label="关闭"><Svg width="11" height="11"><path d="M.5.5l10 10M10.500.5l-10 10" stroke="#999"/></Svg></button>
      </WindowButtons>
    </TitleBar>

    <MenuBar>
      <MenuGroup>
        {menus.map(menu => <button key={menu} type="button">{menu}</button>)}
        <ToolItem icon="change" label="新建变更" arrow tight/>
        <ToolItem icon="robot" label="广小二"/>
      </MenuGroup>
      <Strip $width={187} $center>
        <TipLink href="#help">如何处理筏板附加钢筋..</TipLink>
      </Strip>
      <Strip $grow $pad={5} $gap={9}>
        <ToolItem icon="user" label="13907298339" arrow/>
        <ToolItem label="造价豆:0"/>
        <Icon name="bell"/>
        <More type="button">»</More>
      </Strip>
    </MenuBar>

    <ToolBar $height={30}>
      <Strip $width={150}>
        <ToolItem icon="newFile"/>
        <ToolItem icon="open" arrow/>
        <ToolItem icon="save"/>
        <Divider/>
        <ToolItem icon="undo" arrow/>
        <More type="button">»</More>
      </Strip>
      <Strip $width={549}>
        <ToolItem icon="paint" label="绘图"/>
        <ToolItem icon="sigma" label="汇总计算"/>
        <ToolItem icon="cloud" label="云检查"/>
        <ToolItem icon="align" label="平齐板顶" dim/>
        <ToolItem icon="binoc" label="查找图元" dim/>
        <ToolItem icon="glasses" label="查看钢筋量" dim/>
        <ToolItem icon="batch" label="批量选择" dim/>
        <More type="button">»</More>
      </Strip>
      <Strip $grow $pad={0}>
        <ViewSelect type="button"><Icon name="plane"/>二维<DropArrow color="#666"/></ViewSelect>
        <ToolItem icon="cube" label="俯视" arrow dim/>
        <ToolItem icon="orbit" label="动态观察" dim/>
        <ToolItem icon="local3d" label="局部三维" dim/>
        <Divider/>
        <ToolItem icon="full" label="全屏" dim/>
        <ToolItem icon="zoom" label="缩放" arrow dim/>
        <ToolItem icon="pan" label="平移" arrow tight dim/>
        <ToolItem icon="rotate" label="屏幕旋转" arrow tight dim/>
        <Divider/>
        <ToolItem icon="floors" label="选择楼层" dim/>
        <More type="button">»</More>
      </Strip>
    </ToolBar>

    <Body>
      <Sidebar>
        <DockTitle>
          <DockName>模块导航栏</DockName>
          <Svg width="9" height="10"><path d="M2.500 0v6M1 .5h6M5.500 0v6M6.500 0v6M0 6.500h9M4.500 7v3" stroke="#000"/></Svg>
          <Svg width="8" height="8"><path d="M0 0l8 8M8 0L0 8" stroke="#222"/></Svg>
        </DockTitle>
        <SectionButton type="button">工程设置</SectionButton>
        <SectionButton type="button">绘图输入</SectionButton>
        <ExpandBar>
          <Svg width="17" height="16"><path d="M1 5.500h9M5.500 1v9M8 11.500h9M12.500 7v9" stroke="#000" strokeWidth="3"/><path d="M2 5.500h7M5.500 2v7M9 11.500h7M12.500 8v7" stroke="#00a0a0"/></Svg>
          <Svg width="17" height="16"><path d="M0 5.500h9M7 11.500h9" stroke="#000" strokeWidth="3"/><path d="M1 5.500h7M8 11.500h7" stroke="#00a0a0"/></Svg>
        </ExpandBar>
        <ModuleTree/>
        <SectionButton type="button">单构件输入</SectionButton>
        <SectionButton type="button">报表预览</SectionButton>
      </Sidebar>

      <Center>
        <ToolBar $height={28}>
          <Strip $grow>
            <ToolItem icon="create" label="新建" arrow tight/>
            <ToolItem icon="remove" label="删除"/>
            <ToolItem icon="copy" label="复制"/>
            <ToolItem icon="rename" label="重命名"/>
            <Divider/>
            <FloorBox>楼层
              <FloorSelect defaultValue="基础层"><option>基础层</option></FloorSelect>
            </FloorBox>
            <Divider/>
            <ToolItem icon="sort" label="排序" arrow tight/>
            <ToolItem icon="filter" label="过滤" arrow tight/>
            <Divider/>
            <ToolItem icon="fromFloor" label="从其他楼层复制构件"/>
            <ToolItem icon="toFloor" label="复制构件到其他楼层"/>
            <Divider/>
            <ToolItem label="查找" arrow tight/>
            <Divider/>
            <ToolItem icon="up" label="上移"/>
            <ToolItem icon="down" label="下移"/>
          </Strip>
        </ToolBar>
        <Columns>
          <ComponentPane>
            <SearchRow>
              <SearchInput placeholder="搜索构件..." aria-label="搜索构件"/>
              <Icon name="search"/>
            </SearchRow>
            <Framed>
              <List>
                {components.map(name =>
                  <TreeRow key={name} $indent={31}>
                    <Branch/>
                    <ComponentLeaf $active={name === 'KL-3'}>
                      <Icon name="gear" size={12}/>
                      <span><Mixed>{name}</Mixed></span>
                    </ComponentLeaf>
                  </TreeRow>
                )}
              </List>
              <ScrollBar before={294} size={232} after={1}/>
            </Framed>
          </ComponentPane>

          <EditorPane>
            <TabBar><Tab type="button">属性编辑</Tab></TabBar>
            <Sheet>
              <Properties/>
            </Sheet>
            <StirrupDiagram/>
          </EditorPane>
        </Columns>
      </Center>
    </Body>

    <StatusBar>
      <StatusCell $width={148}></StatusCell>
      <StatusCell $width={78}><span><Mixed>层高:2.15m</Mixed></span></StatusCell>
      <StatusCell $width={98}><span><Mixed>底标高:-2.2m</Mixed></span></StatusCell>
      <StatusCell $width={48}><span><Mixed>0</Mixed></span></StatusCell>
      <StatusCell><span><Mixed>格式：数量+级别+直径+加密间距/非加密间距(肢数)，如：16C10@100/200(4)或C10-100(4)/200(2)</Mixed></span></StatusCell>
      <StatusCell $width={70}><span><Mixed>419.2 FPS</Mixed></span></StatusCell>
    </StatusBar>
    <Tasks/>

    <Ime/>
    <SpeedBall>61</SpeedBall>
    <RebarDialog/>
    <Marker $x={607} $y={256} $w={168} $h={49}/>
    <Marker $x={1016} $y={273} $w={277} $h={132}/>
  </Page>
}
